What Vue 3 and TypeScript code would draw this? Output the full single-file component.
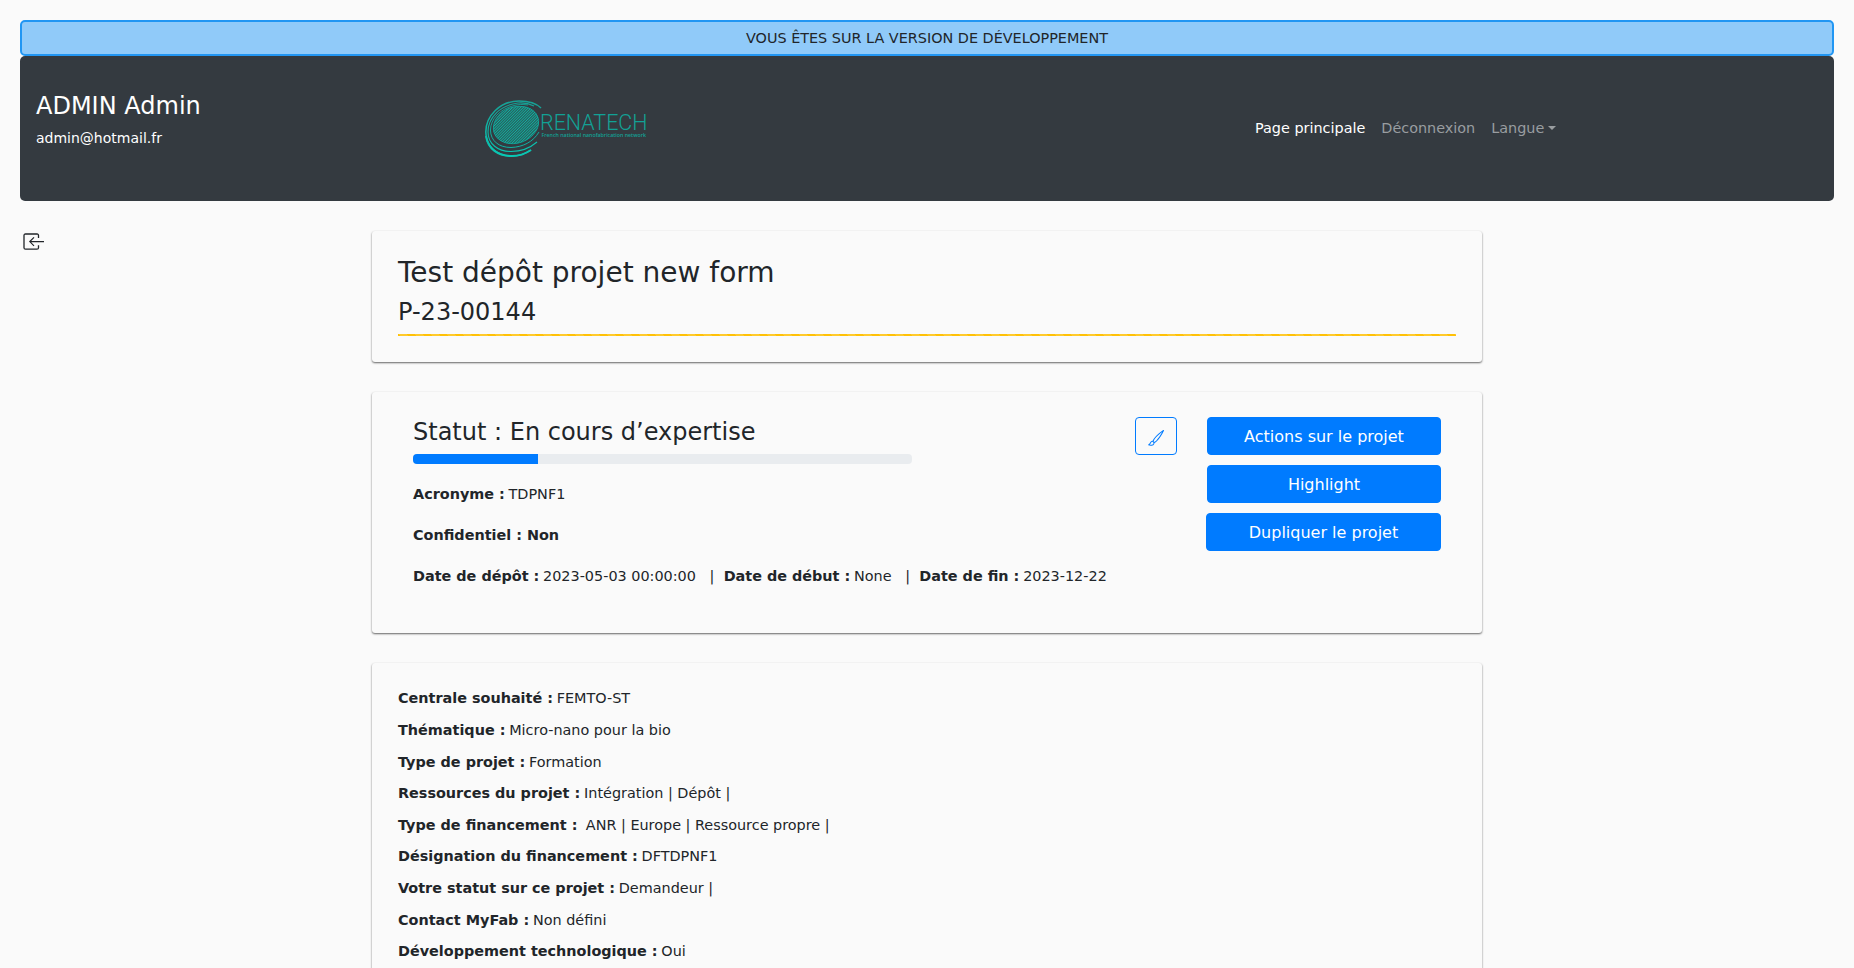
<script setup lang="ts">
interface Detail {
  label: string
  value: string
}

const details: Detail[] = [
  { label: 'Centrale souhaité :', value: 'FEMTO-ST' },
  { label: 'Thématique :', value: 'Micro-nano pour la bio' },
  { label: 'Type de projet :', value: 'Formation' },
  { label: 'Ressources du projet :', value: 'Intégration | Dépôt |' },
  { label: 'Type de financement :', value: '\u00a0ANR | Europe | Ressource propre |' },
  { label: 'Désignation du financement :', value: 'DFTDPNF1' },
  { label: 'Votre statut sur ce projet :', value: 'Demandeur |' },
  { label: 'Contact MyFab :', value: 'Non défini' },
  { label: 'Développement technologique :', value: 'Oui' },
]

const actions: string[] = ['Actions sur le projet', 'Highlight', 'Dupliquer le projet']
const progress = 25

// Parallel hatch lines that fill the disc of the logo.
const hatch: number[] = Array.from({ length: 40 }, (_, i) => -42 + i * 2.7)
</script>

<template>
  <div class="page">
    <div class="banner">VOUS ÊTES SUR LA VERSION DE DÉVELOPPEMENT</div>
    <nav class="navbar">
      <div class="user">
        <h4>ADMIN Admin</h4>
        <p>admin@hotmail.fr</p>
      </div>
      <svg class="logo" width="164" height="60" viewBox="0 0 164 60" fill="none">
        <defs>
          <linearGradient id="ring" gradientUnits="userSpaceOnUse" x1="0" y1="0" x2="0" y2="57">
            <stop offset="0" stop-color="#179f94" />
            <stop offset="1" stop-color="#08c8b4" />
          </linearGradient>
          <clipPath id="disc">
            <ellipse cx="31" cy="25" rx="23.5" ry="18" transform="rotate(-20 31 25)" />
          </clipPath>
        </defs>
        <ellipse cx="31" cy="25" rx="23.2" ry="18" transform="rotate(-20 31 25)" fill="#276661" stroke="#149c92" stroke-width="0.9" />
        <g clip-path="url(#disc)" stroke="#12b0a3" stroke-width="1">
          <path v-for="x in hatch" :key="x" :d="`M${x} 50L${x + 50} 0`" />
        </g>
        <g stroke="url(#ring)">
          <path d="M56 8C50 2 42 1 34 1C15 1 .8 16 .8 32C.8 46 11 56 27 56C34 56 40 54 46 50" stroke-width="1.5" />
          <path d="M49 6C43 3 38 2.500 33 3C16 5 3 17 3 32C3 44 13 51.500 26 51.500C36 51.500 45 48 52 42" stroke-width="1.100" />
          <path d="M43 5C37 4 33 4.500 29 5.500C15 9 5.500 19 5.500 30C5.500 41 14 47.500 26 47.500C38 47 48 42 54 32" stroke-width="0.900" />
          <path d="M1 36C3 49 13 56 27 56C34 56 40 54 46 50" stroke-width="2" />
        </g>
        <text class="logo-name" x="55" y="29.700" textLength="107.500" lengthAdjust="spacingAndGlyphs">RENATECH</text>
        <text class="logo-sub" x="56.500" y="37" textLength="104.500" lengthAdjust="spacingAndGlyphs">French national nanofabrication network</text>
      </svg>
      <div class="links">
        <a class="active">Page principale</a>
        <a>Déconnexion</a>
        <a class="dropdown">Langue</a>
      </div>
    </nav>

    <main class="body">
      <svg class="exit" width="22" height="18" viewBox="0 0 22 18" fill="none" stroke="#212529">
        <path d="M15.500 5V2.500Q15.500 1 14 1H2.500Q1 1 1 2.500V14.700Q1 16.200 2.500 16.200H14Q15.500 16.200 15.500 14.700V12.200" stroke-width="1.300" />
        <path d="M21 8.600H7M11 4.400L6.800 8.600L11 12.800" stroke-width="1.200" />
      </svg>
      <div class="container">
        <section class="card title-card">
          <h3>Test dépôt projet new form</h3>
          <h4>P-23-00144</h4>
          <div class="stripe"></div>
        </section>

        <section class="card status-card">
          <div class="status">
            <h4>Statut : En cours d’expertise</h4>
            <div class="progress"><div class="bar" :style="{ width: progress + '%' }"></div></div>
            <p><b>Acronyme :</b> TDPNF1</p>
            <p><b>Confidentiel : Non</b></p>
            <p>
              <b>Date de dépôt :</b> 2023-05-03 00:00:00 &nbsp; |&nbsp; <b>Date de début :</b> None &nbsp; |&nbsp; <b>Date de fin :</b> 2023-12-22
            </p>
          </div>
          <button class="brush" aria-label="Modifier">
            <svg width="16" height="16" viewBox="0 0 16 16" fill="currentColor">
              <path d="M15.825.12a.5.5 0 0 1 .132.584c-1.53 3.43-4.743 8.17-7.095 10.64a6.067 6.067 0 0 1-2.373 1.534c-.018.227-.06.538-.16.868-.201.659-.667 1.479-1.708 1.740a8.118 8.118 0 0 1-3.078.132 3.659 3.659 0 0 1-.562-.135 1.382 1.382 0 0 1-.466-.247.714.714 0 0 1-.204-.288.622.622 0 0 1 .004-.443c.095-.245.316-.380.461-.452.394-.197.625-.453.867-.826.095-.144.184-.297.287-.472l.117-.198c.151-.255.326-.540.546-.848.528-.739 1.201-.925 1.746-.896.126.007.243.025.348.048.062-.172.142-.380.238-.608.261-.619.658-1.419 1.187-2.069 2.176-2.670 6.180-6.206 9.117-8.104a.5.5 0 0 1 .596.040M4.705 11.912a1.230 1.230 0 0 0-.419-.100c-.246-.013-.573.050-.879.479-.197.275-.355.532-.500.777l-.105.177c-.106.181-.213.362-.320.528a3.390 3.390 0 0 1-.760.861c.690.112 1.736.111 2.657-.120.559-.139.843-.569.993-1.060a3.122 3.122 0 0 0 .126-.750zm1.440.026c.120-.040.277-.100.458-.183a5.068 5.068 0 0 0 1.535-1.100c1.900-1.996 4.412-5.570 6.052-8.631-2.590 1.927-5.566 4.660-7.302 6.792-.442.543-.795 1.243-1.042 1.826-.121.288-.214.540-.275.720v.001l.575.575zm-4.973 3.040.007-.005a.031.031 0 0 1-.007.004zm3.582-3.043.002.001h-.002z" />
            </svg>
          </button>
          <div class="actions">
            <button v-for="action in actions" :key="action">{{ action }}</button>
          </div>
        </section>

        <section class="card detail-card">
          <p v-for="item in details" :key="item.label"><b>{{ item.label }}</b> {{ item.value }}</p>
        </section>
      </div>
    </main>
  </div>
</template>

<style>
html,
body {
  margin: 0;
  background: #fafafa;
  overflow: hidden;
}
</style>

<style scoped>
.page {
  box-sizing: border-box;
  height: 968px;
  overflow: hidden;
  padding: 20px;
  padding-bottom: 0;
  font: 14.4px/1.5 "DejaVu Sans", sans-serif;
  color: #212529;
}
.page * {
  box-sizing: border-box;
}
h3,
h4,
p {
  margin: 0;
  font-weight: 400;
}
h3 {
  font-size: 28px;
  line-height: 33.6px;
}
h4 {
  font-size: 24px;
  line-height: 28.8px;
}
b {
  margin-right: -0.8px;
}
.banner {
  height: 36px;
  padding: 6px 5px 4px;
  border: 2px solid #2196f3;
  border-radius: 5px;
  background: #90caf9;
  text-align: center;
}
.navbar {
  display: flex;
  height: 145px;
  padding: 0 16px;
  border-radius: 5px;
  background: #343a40;
  color: #fff;
}
.user {
  width: 448px;
  padding-top: 36px;
}
.user p {
  margin-top: 7px;
  font-size: 14px;
}
.logo {
  overflow: visible;
  margin: 43.500px 0 0 1px;
}
.logo-name {
  fill: #12a195;
  font: 300 22.5px "Roboto", sans-serif;
}
.logo-sub {
  fill: #12a195;
  font: 600 5.8px "Open Sans", sans-serif;
}
.links {
  display: flex;
  gap: 16px;
  padding-top: 62px;
  margin-left: 606px;
  color: #999da0;
}
.links .active {
  color: #fff;
}
.dropdown::after {
  content: "";
  display: inline-block;
  margin-left: 3.7px;
  vertical-align: 3.4px;
  border: 4.3px solid transparent;
  border-top-color: currentColor;
  border-bottom: 0;
}
.body {
  display: flex;
  padding-top: 30px;
}
.exit {
  flex: none;
  margin: 2px 0 0 3px;
}
.container {
  width: 1110px;
  margin-left: 327px;
}
.card {
  margin-bottom: 30px;
  border-radius: 3px;
  box-shadow: 0 1px 2px rgba(0, 0, 0, 0.6);
}
.title-card {
  height: 131px;
  padding: 25px 26px;
}
.title-card h4 {
  margin-top: 8px;
}
.stripe {
  height: 2px;
  margin-top: 7.600px;
  background: #ffc107 linear-gradient(45deg, rgba(255, 255, 255, 0.15) 25%, transparent 25%, transparent 50%, rgba(255, 255, 255, 0.15) 50%, rgba(255, 255, 255, 0.15) 75%, transparent 75%) 0 0 / 16px 16px;
}
.status-card {
  display: flex;
  height: 241px;
  padding: 25px 41px 0;
}
.status {
  width: 722px;
}
.status h4 {
  padding-top: 1px;
}
.progress {
  display: flex;
  width: 499px;
  height: 10px;
  margin: 7.200px 0 20px;
  overflow: hidden;
  border-radius: 4px;
  background: #e9ecef;
}
.bar {
  background: #007bff;
}
.status p {
  margin-bottom: 19.4px;
  white-space: nowrap;
}
button {
  height: 38px;
  padding: 1px 0 0;
  border: 1px solid #007bff;
  border-radius: 4px;
  background: #007bff;
  color: #fff;
  font: 16px/24px "DejaVu Sans", sans-serif;
}
.brush {
  display: flex;
  align-items: center;
  justify-content: center;
  width: 42px;
  padding: 4px 0 0;
  background: none;
  color: #007bff;
}
.actions {
  display: flex;
  flex-direction: column;
  align-items: flex-end;
  gap: 10px;
  width: 235px;
  margin-left: 29px;
}
.actions button {
  width: 234px;
}
.actions button:last-child {
  width: 235px;
}
.detail-card {
  height: 500px;
  padding: 25.400px 26px;
}
.detail-card p {
  margin-bottom: 10px;
}
</style>
